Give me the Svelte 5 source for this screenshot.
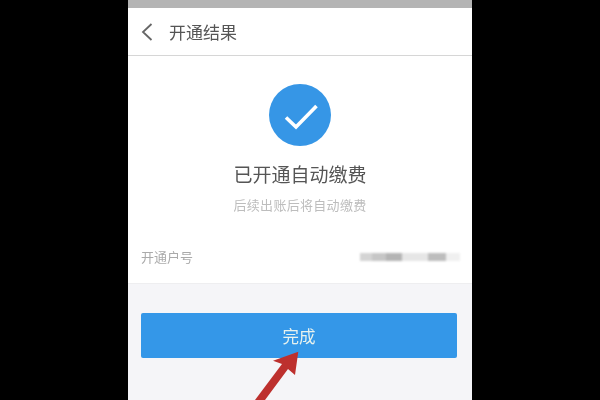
<script>
	const account = [
		{ w: 12, c: '#d4d4d4' },
		{ w: 14, c: '#c6c6c6' },
		{ w: 16, c: '#b4b4b4' },
		{ w: 26, c: '#e6e6e6' },
		{ w: 18, c: '#bdbdbd' },
		{ w: 14, c: '#f0f0f0' }
	];
</script>

<main>
	<div class="phone">
		<div class="status"></div>
		<header>
			<svg class="back" width="14" height="18" viewBox="0 0 14 18">
				<path d="M11.5 1 L3 9 L11.5 17" fill="none" stroke="#666" stroke-width="1.8" />
			</svg>
			<span>开通结果</span>
		</header>

		<section class="result">
			<svg class="check" width="62" height="62" viewBox="0 0 62 62">
				<circle cx="31" cy="31" r="31" fill="#3696e6" />
				<path d="M17 33.5 L27 43 L47.5 22" fill="none" stroke="#fff" stroke-width="3.6" />
			</svg>
			<h1>已开通自动缴费</h1>
			<p>后续出账后将自动缴费</p>
			<div class="row">
				<span>开通户号</span>
				<div class="masked">
					{#each account as seg}
						<i style="width: {seg.w}px; background: {seg.c}"></i>
					{/each}
				</div>
			</div>
		</section>

		<footer>
			<button>完成</button>
		</footer>

		<svg class="arrow" width="60" height="60" viewBox="0 0 60 60">
			<path d="M13 60 L40 24 L31 20.7 L56.3 11.7 L53 35 L46 29 L23 60 Z" fill="#bd302e" />
		</svg>
	</div>
</main>

<style>
	:global(body) {
		background: #000;
	}

	main {
		height: 400px;
		display: flex;
		justify-content: center;
		background: #000;
		font-family: "Liberation Sans", "Noto Sans CJK SC", sans-serif;
		overflow: hidden;
	}

	.phone {
		position: relative;
		width: 344px;
		height: 400px;
		display: flex;
		flex-direction: column;
		background: #f5f5f8;
		overflow: hidden;
		filter: blur(0.7px);
	}

	.status {
		height: 8px;
		background: #b4b4b4;
	}

	header {
		height: 47px;
		display: flex;
		align-items: center;
		gap: 15px;
		padding-left: 12px;
		background: #fff;
		border-bottom: 1px solid #d6d6d6;
		font-size: 17px;
		color: #555;
	}

	.back {
		flex: none;
	}

	.result {
		height: 227px;
		display: flex;
		flex-direction: column;
		align-items: center;
		background: #fff;
		border-bottom: 1px solid #eeeef0;
	}

	.check {
		margin-top: 28px;
	}

	h1 {
		margin: 17px 0 0;
		font-size: 19px;
		line-height: 26px;
		font-weight: 400;
		color: #555;
	}

	p {
		margin: 8px 0 0;
		font-size: 13px;
		line-height: 18px;
		letter-spacing: 0.3px;
		color: #bdbdbd;
	}

	.row {
		align-self: stretch;
		display: flex;
		justify-content: space-between;
		align-items: center;
		margin-top: 32px;
		padding: 0 12px 0 13px;
		font-size: 13px;
		color: #aaa;
	}

	.masked {
		display: flex;
		height: 8px;
		filter: blur(1px);
	}

	.masked i {
		display: block;
	}

	footer {
		padding: 29px 15px 0 13px;
	}

	button {
		display: block;
		width: 100%;
		height: 45px;
		padding: 0;
		border: none;
		border-radius: 2px;
		background: #3497e8;
		color: #e8f2ee;
		font-family: inherit;
		font-size: 16.5px;
	}

	.arrow {
		position: absolute;
		left: 114px;
		top: 340px;
	}
</style>
